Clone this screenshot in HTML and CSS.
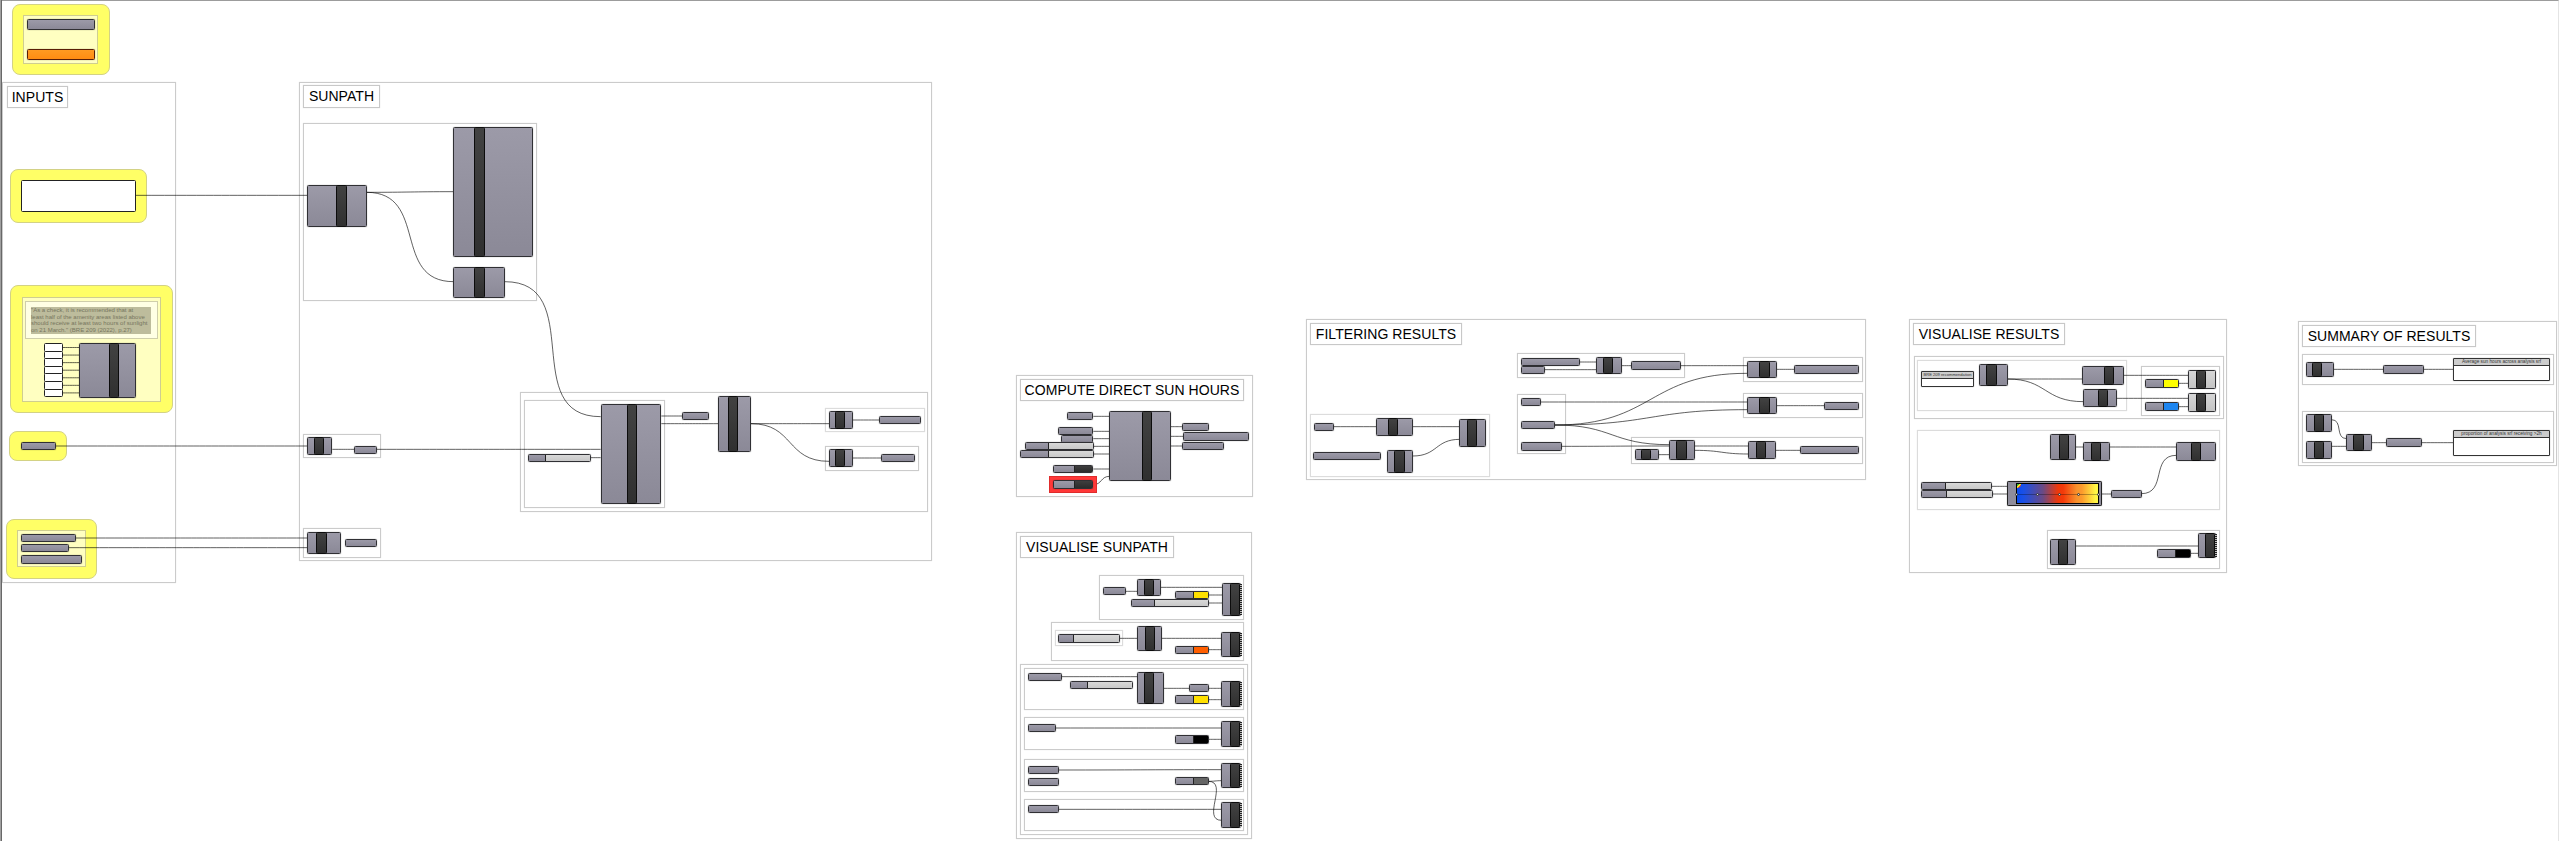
FILE: index.html
```
<!DOCTYPE html>
<html lang="en">
<head>
<meta charset="utf-8">
<title>Sun hours definition</title>
<link rel="stylesheet" href="styles.css">
</head>
<body>
<main class="canvas" id="canvas">
  <div class="layer" id="groups"></div>
  <svg class="wires" id="wires" width="2559" height="841"></svg>
  <div class="layer" id="nodes"></div>
</main>
<script src="graph.js"></script>
</body>
</html>
```
FILE: styles.css
```
* { box-sizing: border-box; }
body { margin: 0; background: #fff; font-family: "Liberation Sans", Arial, sans-serif; }
.canvas { position: relative; width: 2559px; height: 841px; overflow: hidden; background: #fff; }
.canvas::before { content: ""; position: absolute; inset: 0; border-top: 1px solid #9c9c9c; border-right: 1px solid #e4e4e4; }
.canvas::after { content: ""; position: absolute; left: 0; top: 0; bottom: 0; width: 2px; background: linear-gradient(90deg, #a0a0a0 50%, #686868 50%); }
.layer, .wires { position: absolute; left: 0; top: 0; }
.wires path { fill: none; stroke: #000; stroke-opacity: .62; stroke-width: 1; }

.group, .title, .zone, .node, .param, .split, .panel, .note, .alert, .ramp, .blank { position: absolute; }
.group { border: 1px solid #cbcbcb; box-shadow: 0 0 1px rgba(0,0,0,.12); }
.group.pale { border-color: #dcdcdc; }
.title { display: flex; align-items: center; justify-content: center; padding-bottom: 1px; border: 1px solid #c8c8c8; box-shadow: 0 0 1px rgba(0,0,0,.15); background: #fff; color: #000; font-size: 14px; letter-spacing: .05px; line-height: 18px; white-space: nowrap; }
.zone { background: #ffff66; border: 1px solid #d3d285; border-radius: 8px; }
.inner { background: #ffffc1; border-color: #cfce90; box-shadow: none; }
.alert { background: #ff3838; border: 1px solid #e02c2c; }

.node, .param, .split { border: 1px solid #303034; border-radius: 1.5px; background: linear-gradient(#9c9aa8, #8b8997); box-shadow: 0 0 1px rgba(0,0,0,.55); }
.node { display: flex; }
.node.light { background: linear-gradient(#d6d6d6, #c4c4c4); }
.bar { margin: -1px 0; border: 1px solid #0c0c0c; border-radius: 1.5px; background: linear-gradient(#424242, #303030); }
.jagged::after { content: ""; position: absolute; right: -2px; top: 0; bottom: 0; width: 2px; background: repeating-linear-gradient(#222 0 1px, #bbb 1px 2px); }
.split { display: flex; }
.rest { flex: 1; border-left: 1px solid #222; }
.rest.slider { background: linear-gradient(#d8d8d8, #c8c8c8); }
.rest.yellow { background: #ffe000; }
.rest.lemon { background: #ffff00; }
.rest.orange { background: #ff5f00; }
.rest.blue { background: #1e86f0; }
.rest.black { background: #000; }
.rest.gray { background: #656565; }
.rest.toggle { background: linear-gradient(#3e3e3e, #2c2c2c); }
.param.hot { background: linear-gradient(#ff9a22, #ff8c12); border-color: #5a1e05; }
.blank { background: #fff; border: 1px solid #222; border-radius: 1.5px; }

.panel { border: 1px solid #333; border-radius: 1px; background: #fff; box-shadow: 0 0 1px rgba(0,0,0,.5); display: flex; flex-direction: column; }
.panel-head { height: 7px; flex: none; background: #cccccc; border-bottom: 1px solid #333; color: #333; font-size: 4.7px; line-height: 6px; text-align: center; white-space: nowrap; }
.panel-head.small { font-size: 4.1px; }
.note { border: 1px solid #cfceaa; background: #ffffe4; padding: 5px 0 0 5px; }
.note-text { width: 120px; height: 27px; background: #bdbc9c; color: #77765e; font-size: 6px; line-height: 6.7px; white-space: nowrap; }
.ramp { border: 1px solid #222; border-radius: 1.5px; background: #8f8d9b; box-shadow: 0 0 1px rgba(0,0,0,.6); padding: 1px 2px 1px 8px; }
.ramp-fill { position: relative; height: 100%; border: 1px solid #000; background: linear-gradient(90deg, #0a4cf0 0%, #1a50e6 8%, #6a4a84 32%, #f03808 51%, #f43a0a 57%, #f8922c 74%, #fc9a2c 80%, #fff644 97%); }
.ramp-fill::before { content: ""; position: absolute; left: 0; right: 0; top: 10px; height: 1px; background: rgba(0,0,0,.3); }
.grip { position: absolute; top: 9px; width: 3px; height: 3px; border: 1px solid #333; border-radius: 50%; background: #ddd; }
.wheel { position: absolute; left: 0; top: 0; width: 4px; height: 4px; border-radius: 0 0 4px 0; background: linear-gradient(135deg, #2fbd3a 35%, #ffe020 35% 60%, #f04020 60%); }
```
FILE: graph.js
```
// Each cluster has an origin in pixels; item coordinates are thirds of a pixel from it.
const layers = {
  groups: document.getElementById('groups'),
  wires: document.getElementById('wires'),
  nodes: document.getElementById('nodes')
};

function cluster(ox, oy) {
  function box(layer, cls, x1, y1, x2, y2, html) {
    const el = document.createElement('div');
    const l = Math.floor(x1 / 3), t = Math.floor(y1 / 3);
    el.className = cls;
    el.style.left = ox + l + 'px';
    el.style.top = oy + t + 'px';
    el.style.width = Math.floor((x2 - 1) / 3) + 1 - l + 'px';
    el.style.height = Math.floor((y2 - 1) / 3) + 1 - t + 'px';
    if (html) el.innerHTML = html;
    layers[layer].appendChild(el);
    return el;
  }
  const api = {
    group: (a, b, c, d, cls = '') => box('groups', 'group ' + cls, a, b, c, d),
    zone: (a, b, c, d) => box('groups', 'zone', a, b, c, d),
    title: (a, b, c, d, text) => box('groups', 'title', a, b, c, d, text),
    item: (cls, a, b, c, d, html) => box('nodes', cls, a, b, c, d, html),
    param: (a, b, c, d, cls = '') => box('nodes', 'param ' + cls, a, b, c, d),
    node(a, b, c, d, b1, b2, cls = '') {
      const gap = Math.floor(b1 / 3) - Math.floor(a / 3) - 1;
      const w = Math.floor(b2 / 3) - Math.floor(b1 / 3) + 1;
      box('nodes', 'node ' + cls, a, b, c, d,
        `<div class="bar" style="margin-left:${gap}px;width:${w}px"></div>`);
    },
    split(a, b, c, d, s, kind) {
      const w = Math.floor(s / 3) - Math.floor(a / 3) - 1;
      box('nodes', 'split', a, b, c, d,
        `<div style="width:${w}px"></div><div class="rest ${kind}"></div>`);
    },
    wire(a, b, c, d) {
      const x1 = ox + a / 3, y1 = oy + b / 3, x2 = ox + c / 3, y2 = oy + d / 3;
      const k = Math.hypot(x2 - x1, y2 - y1) / 2;
      const p = document.createElementNS('http://www.w3.org/2000/svg', 'path');
      p.setAttribute('d', `M${x1} ${y1}C${x1 + k} ${y1} ${x2 - k} ${y2} ${x2} ${y2}`);
      layers.wires.appendChild(p);
    }
  };
  return api;
}

// Legend and inputs
let g = cluster(0, 0);
g.zone(37, 12, 328, 223);
g.group(71, 46, 293, 190, 'inner');
g.param(82, 57, 283, 90);
g.param(82, 147, 283, 179, 'hot');
g.group(7, 248, 528, 1747);
g.title(22, 260, 204, 324, 'INPUTS');
g.zone(31, 507, 441, 668);
g.item('blank', 64, 541, 408, 634);
g.wire(408, 586, 921, 586);

g = cluster(0, 280);
g.zone(32, 17, 517, 398);
g.group(66, 53, 483, 364, 'inner');
g.item('note', 77, 64, 472, 175,
  '<div class="note-text">"As a check, it is recommended that at<br>least half of the amenity areas listed above<br>should receive at least two hours of sunlight<br>on 21 March." (BRE 209 (2022), p.27)</div>');
for (let i = 0; i < 7; i++) {
  const y = 191 + i * 22.7;
  g.item('blank', 132, y, 188, y + 24);
  g.wire(188, y + 11.5, 238, y + 11.5);
}
g.node(238, 189, 408, 352, 327, 355);
g.zone(29, 453, 200, 543);
g.param(64, 487, 167, 509);
g.wire(167, 498, 921, 498);
g.zone(19, 718, 289, 895);
g.group(52, 752, 256, 861, 'inner');
g.param(64, 763, 226, 785);
g.param(64, 793, 207, 815);
g.param(64, 827, 244, 850);
g.wire(227, 774, 921, 774);
g.wire(207, 803, 921, 803);

// Sunpath
g = cluster(290, 70);
g.group(28, 37, 1926, 1472);
g.title(40, 47, 268, 112, 'SUNPATH');
g.group(40, 160, 740, 693);
g.node(52, 345, 229, 469, 140, 168);
g.node(491, 171, 729, 560, 554, 582);
g.node(491, 591, 643, 683, 554, 582);
g.wire(230, 367, 491, 365);
g.wire(230, 367, 491, 635);
g.wire(644, 635, 932, 1040);

g = cluster(290, 380);
g.group(40, 162, 271, 234);
g.node(52, 172, 126, 223, 73, 101);
g.param(192, 198, 260, 220);
g.group(40, 446, 272, 532);
g.node(52, 458, 151, 520, 80, 108);
g.param(165, 478, 261, 501);
g.group(692, 38, 1914, 394);
g.group(703, 61, 1124, 382);
g.split(714, 222, 903, 244, 767, 'slider');
g.node(933, 72, 1113, 371, 1011, 1039);
g.param(1177, 97, 1257, 120);
g.node(1286, 49, 1383, 214, 1314, 1341);
g.group(1606, 84, 1903, 156, 'pale');
g.node(1617, 94, 1687, 146, 1636, 1664);
g.param(1768, 108, 1892, 131);
g.group(1606, 198, 1885, 271);
g.node(1617, 208, 1687, 260, 1636, 1664);
g.param(1774, 222, 1874, 245);
g.wire(127, 208, 192, 208);
g.wire(260, 208, 932, 208);
g.wire(903, 233, 932, 233);
g.wire(1114, 108, 1177, 108);
g.wire(1114, 131, 1285, 131);
g.wire(1383, 131, 1617, 131);
g.wire(1383, 131, 1617, 244);
g.wire(1688, 120, 1768, 120);
g.wire(1688, 234, 1774, 234);

// Compute direct sun hours
g = cluster(1005, 370);
g.group(35, 17, 742, 379);
g.title(46, 28, 715, 92, 'COMPUTE DIRECT SUN HOURS');
g.param(186, 127, 264, 150);
g.param(161, 172, 264, 194);
g.param(170, 195, 264, 217);
g.split(61, 218, 265, 240, 130, 'slider');
g.split(47, 241, 265, 262, 130, 'slider');
g.split(145, 286, 263, 309, 208, 'toggle');
g.item('alert', 134, 320, 274, 367);
g.split(145, 332, 263, 355, 208, 'toggle');
g.node(314, 125, 496, 332, 412, 439);
g.param(533, 159, 611, 181);
g.param(535, 188, 730, 211);
g.param(533, 217, 655, 239);
for (const y of [139, 184, 206, 229, 252, 297]) g.wire(265, y, 314, y);
g.wire(264, 344, 314, 319);
for (const y of [170, 199, 228]) g.wire(497, y, 535, y);

// Visualise sunpath
g = cluster(1005, 525);
g.group(35, 22, 739, 940);
g.title(46, 35, 505, 99, 'VISUALISE SUNPATH');
g.group(283, 152, 715, 283);
g.param(294, 187, 361, 209);
g.node(397, 163, 468, 212, 418, 445);
g.split(511, 199, 610, 221, 565, 'yellow');
g.split(380, 222, 610, 245, 448, 'slider');
g.node(652, 174, 706, 271, 676, 703, 'jagged');
g.wire(361, 199, 397, 199);
g.wire(468, 187, 652, 187);
g.wire(611, 210, 652, 210);
g.wire(611, 234, 652, 234);
g.group(139, 293, 715, 406);
g.group(150, 317, 354, 363, 'pale');
g.split(161, 328, 343, 352, 205, 'slider');
g.node(397, 304, 469, 376, 421, 448);
g.split(511, 363, 610, 385, 565, 'orange');
g.node(650, 321, 706, 394, 676, 703, 'jagged');
g.wire(343, 340, 397, 340);
g.wire(469, 340, 650, 340);
g.wire(611, 374, 650, 374);
g.group(46, 419, 727, 929);
g.group(58, 431, 715, 555);
g.param(69, 444, 169, 466);
g.split(195, 469, 382, 492, 247, 'slider');
g.node(397, 442, 475, 537, 418, 445);
g.param(553, 479, 610, 500);
g.split(511, 512, 610, 535, 565, 'yellow');
g.node(650, 470, 706, 544, 676, 703, 'jagged');
g.wire(169, 455, 397, 455);
g.wire(475, 490, 553, 490);
g.wire(610, 490, 650, 490);
g.wire(610, 524, 650, 524);
g.group(58, 578, 715, 675);
g.param(69, 598, 152, 620);
g.split(511, 632, 610, 655, 565, 'black');
g.node(650, 590, 706, 664, 676, 703, 'jagged');
g.wire(152, 609, 650, 609);
g.wire(610, 643, 650, 643);
g.group(58, 703, 715, 799);
g.param(69, 723, 161, 746);
g.param(69, 759, 161, 781);
g.split(511, 758, 610, 780, 565, 'gray');
g.node(650, 714, 706, 788, 676, 703, 'jagged');
g.wire(161, 735, 650, 734);
g.wire(610, 769, 650, 767);
g.wire(610, 769, 650, 886);
g.group(58, 822, 715, 918);
g.param(69, 842, 161, 864);
g.node(650, 833, 706, 907, 676, 703, 'jagged');
g.wire(161, 853, 650, 853);

// Filtering results
g = cluster(1300, 310);
g.group(18, 29, 1697, 510);
g.title(31, 40, 484, 103, 'FILTERING RESULTS');
g.group(30, 313, 568, 499, 'pale');
g.param(43, 339, 100, 361);
g.node(229, 324, 338, 377, 264, 292);
g.param(40, 428, 241, 450);
g.node(262, 420, 338, 488, 283, 312);
g.node(479, 329, 556, 409, 501, 529);
g.wire(100, 350, 229, 350);
g.wire(338, 350, 480, 350);
g.wire(338, 438, 480, 388);
g.group(653, 130, 1153, 202);
g.param(664, 145, 838, 167);
g.param(664, 169, 733, 190);
g.node(889, 142, 964, 191, 911, 938);
g.param(994, 155, 1141, 178);
g.wire(838, 156, 889, 156);
g.wire(733, 179, 889, 179);
g.wire(964, 167, 994, 167);
g.wire(1141, 167, 1341, 167);
g.group(653, 253, 797, 432);
g.param(664, 264, 721, 287);
g.param(664, 334, 764, 356);
g.param(664, 398, 786, 421);
g.wire(721, 276, 1341, 276);
g.wire(765, 345, 1341, 190);
g.wire(765, 345, 1341, 299);
g.wire(765, 345, 1108, 404);
g.wire(786, 409, 1108, 408);
g.group(1330, 142, 1687, 214);
g.node(1341, 153, 1430, 203, 1379, 1407);
g.param(1483, 166, 1675, 190);
g.wire(1430, 178, 1483, 178);
g.group(1330, 250, 1687, 323);
g.node(1341, 262, 1430, 312, 1379, 1407);
g.param(1574, 276, 1675, 298);
g.wire(1430, 287, 1574, 287);
g.group(994, 381, 1687, 460);
g.node(1005, 418, 1076, 449, 1023, 1052);
g.node(1108, 392, 1184, 450, 1129, 1158);
g.node(1344, 394, 1426, 445, 1369, 1397);
g.param(1501, 409, 1675, 432);
g.wire(1076, 434, 1108, 434);
g.wire(1184, 408, 1345, 408);
g.wire(1184, 421, 1345, 432);
g.wire(1426, 421, 1501, 421);

// Visualise results
g = cluster(1900, 310);
g.group(29, 28, 979, 787);
g.title(40, 39, 493, 103, 'VISUALISE RESULTS');
g.group(43, 139, 970, 325);
g.group(53, 151, 681, 301, 'pale');
g.item('panel', 64, 185, 220, 229, '<div class="panel-head small">BRE 209 recommendation</div>');
g.node(238, 162, 322, 226, 260, 288);
g.node(548, 170, 670, 223, 613, 640);
g.node(551, 238, 649, 290, 595, 622);
g.group(724, 170, 958, 316);
g.split(736, 209, 835, 232, 790, 'lemon');
g.split(736, 278, 835, 301, 790, 'blue');
g.node(866, 181, 946, 236, 890, 917, 'light');
g.node(866, 249, 946, 304, 890, 917, 'light');
g.wire(322, 207, 548, 207);
g.wire(322, 207, 551, 275);
g.wire(670, 196, 866, 196);
g.wire(649, 265, 866, 265);
g.wire(835, 220, 866, 220);
g.wire(835, 290, 866, 290);
g.group(52, 362, 958, 599, 'pale');
g.node(452, 373, 528, 448, 478, 506);
g.node(551, 397, 628, 453, 574, 602);
g.node(829, 397, 947, 451, 873, 900);
g.split(64, 517, 274, 539, 137, 'slider');
g.split(64, 541, 277, 563, 140, 'slider');
g.item('ramp', 322, 515, 605, 588,
  '<div class="ramp-fill"><i class="wheel"></i><i class="grip" style="left:-2px"></i><i class="grip" style="left:19px"></i><i class="grip" style="left:41px"></i><i class="grip" style="left:60px"></i><i class="grip" style="left:80px"></i></div>');
g.param(634, 541, 724, 563);
g.wire(528, 411, 551, 411);
g.wire(628, 411, 829, 411);
g.wire(274, 529, 322, 529);
g.wire(277, 552, 322, 552);
g.wire(605, 552, 634, 552);
g.wire(724, 551, 829, 436);
g.group(442, 660, 958, 776);
g.node(452, 688, 528, 764, 475, 502);
g.split(772, 719, 871, 742, 826, 'black');
g.node(895, 671, 947, 744, 916, 944, 'jagged');
g.wire(528, 708, 895, 708);
g.wire(871, 730, 895, 730);

// Summary of results
g = cluster(2290, 310);
g.group(26, 34, 800, 467);
g.title(38, 45, 557, 109, 'SUMMARY OF RESULTS');
g.group(37, 134, 790, 223);
g.node(49, 157, 130, 200, 66, 94);
g.param(280, 167, 401, 190);
g.item('panel', 489, 145, 778, 212, '<div class="panel-head">Average sun hours across analysis srf</div>');
g.wire(130, 178, 280, 178);
g.wire(401, 178, 489, 178);
g.group(37, 304, 790, 457);
g.node(49, 314, 124, 365, 72, 100);
g.node(49, 395, 124, 445, 72, 100);
g.node(170, 373, 244, 423, 191, 219);
g.param(289, 386, 394, 409);
g.item('panel', 489, 361, 778, 436, '<div class="panel-head">proportion of analysis srf receiving &gt;2h</div>');
g.wire(124, 329, 170, 386);
g.wire(124, 409, 170, 409);
g.wire(244, 398, 289, 398);
g.wire(394, 398, 489, 398);
```
